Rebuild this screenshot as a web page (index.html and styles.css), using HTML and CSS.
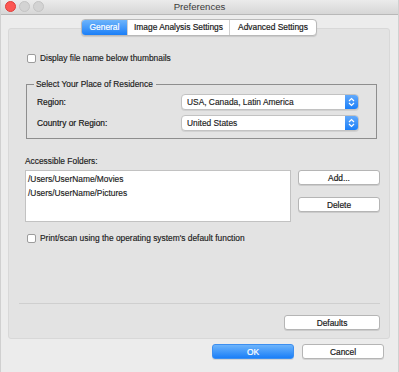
FILE: index.html
```html
<!DOCTYPE html>
<html lang="en">
<head>
    <meta charset="UTF-8">
    <title>Preferences</title>
    <link rel="stylesheet" href="styles.css">
</head>
<body>
    <div class="window">
        <div class="titlebar">
            <div class="lights">
                <span class="light close"></span>
                <span class="light"></span>
                <span class="light"></span>
            </div>
            <div class="title">Preferences</div>
        </div>

        <div class="content">
            <div class="tabs">
                <div class="tab active">General</div>
                <div class="tab">Image Analysis Settings</div>
                <div class="tab">Advanced Settings</div>
            </div>

            <div class="panel">
                <label class="check">
                    <span class="box"></span>
                    Display file name below thumbnails
                </label>

                <fieldset class="group">
                    <legend>Select Your Place of Residence</legend>
                    <div class="row">
                        <span class="row-label">Region:</span>
                        <div class="popup">
                            <span class="popup-text">USA, Canada, Latin America</span>
                            <span class="popup-arrows">
                                <svg width="7" height="10" viewBox="0 0 7 10"><path d="M1 4 L3.5 1.5 L6 4 M1 6 L3.5 8.5 L6 6" fill="none" stroke="#fff" stroke-width="1.2"/></svg>
                            </span>
                        </div>
                    </div>
                    <div class="row">
                        <span class="row-label">Country or Region:</span>
                        <div class="popup">
                            <span class="popup-text">United States</span>
                            <span class="popup-arrows">
                                <svg width="7" height="10" viewBox="0 0 7 10"><path d="M1 4 L3.5 1.5 L6 4 M1 6 L3.5 8.5 L6 6" fill="none" stroke="#fff" stroke-width="1.2"/></svg>
                            </span>
                        </div>
                    </div>
                </fieldset>

                <div class="section-label">Accessible Folders:</div>
                <div class="folders">
                    <div class="list">
                        <div class="item">/Users/UserName/Movies</div>
                        <div class="item">/Users/UserName/Pictures</div>
                    </div>
                    <div class="side-buttons">
                        <button class="btn">Add...</button>
                        <button class="btn">Delete</button>
                    </div>
                </div>

                <label class="check check-print">
                    <span class="box"></span>
                    Print/scan using the operating system's default function
                </label>

                <hr class="separator">

                <div class="panel-footer">
                    <button class="btn btn-wide">Defaults</button>
                </div>
            </div>

            <div class="footer">
                <button class="btn btn-primary">OK</button>
                <button class="btn">Cancel</button>
            </div>
        </div>
    </div>
</body>
</html>
```

FILE: styles.css
```css
body {
    margin: 0;
    font-family: "Liberation Sans", Arial, sans-serif;
    color: #1a1a1a;
    background: #ececec;
}
.window {
    width: 399px;
    height: 372px;
    box-sizing: border-box;
    background: #ececec;
    border-left: 1px solid #d0d0d0;
    border-right: 1px solid #d0d0d0;
    overflow: hidden;
}
.titlebar {
    position: relative;
    height: 14px;
    background: linear-gradient(#ebebeb, #d6d6d6);
    border-bottom: 1px solid #b8b8b8;
}
.lights {
    display: flex;
    gap: 3px;
    padding: 1px 0 0 4px;
}
.light {
    width: 11px;
    height: 11px;
    border-radius: 50%;
    box-sizing: border-box;
    background: #d3d3d3;
    border: 1px solid #c4c4c4;
}
.light.close {
    background: #fc5753;
    border-color: #df3e3a;
}
.title {
    position: absolute;
    left: 0;
    right: 0;
    top: 1px;
    text-align: center;
    font-size: 9.6px;
    color: #3a3a3a;
}
.content {
    padding: 0 8px 0 7px;
}
.tabs {
    position: relative;
    z-index: 1;
    display: flex;
    width: max-content;
    margin: 4px auto -8px;
    background: #fff;
    border: 1px solid #b9b9b9;
    border-radius: 4px;
    box-shadow: 0 1px 1px rgba(0, 0, 0, 0.12);
    overflow: hidden;
}
.tab {
    height: 15px;
    line-height: 15px;
    font-size: 8.4px;
    -webkit-text-stroke: 0.2px #1a1a1a;
    text-align: center;
    border-left: 1px solid #d0d0d0;
}
.tab:nth-child(1) {
    width: 45px;
    border-left: none;
}
.tab:nth-child(2) {
    width: 101px;
}
.tab:nth-child(3) {
    width: 86px;
}
.tab.active {
    color: #fff;
    -webkit-text-stroke: 0.2px #fff;
    background: linear-gradient(#6db4fb, #1b7ff8);
}
.panel {
    height: 311px;
    box-sizing: border-box;
    background: #e3e3e3;
    border: 1px solid #d8d8d8;
    border-radius: 3px;
    padding: 24px 9px 0 10px;
    font-size: 8.4px;
}
.check {
    display: flex;
    align-items: center;
    gap: 4px;
    height: 10px;
    margin-left: 8px;
    -webkit-text-stroke: 0.15px #1a1a1a;
}
.box {
    width: 9px;
    height: 9px;
    box-sizing: border-box;
    background: #fff;
    border: 1px solid #9c9c9c;
    border-radius: 2px;
}
.group {
    margin: 16px 3px 0 7px;
    padding: 5px 17px 7px 10px;
    border: 1px solid #8e8e8e;
    border-radius: 0;
}
.group legend {
    padding: 0 3px 0 2px;
    margin-left: -3px;
    -webkit-text-stroke: 0.15px #1a1a1a;
}
.row {
    display: flex;
    align-items: center;
    justify-content: space-between;
    margin-bottom: 5px;
}
.row:last-child {
    margin-bottom: 0;
}
.row-label {
    -webkit-text-stroke: 0.2px #1a1a1a;
}
.popup {
    display: flex;
    align-items: center;
    width: 178px;
    height: 16px;
    box-sizing: border-box;
    background: #fff;
    border: 1px solid #c2c2c2;
    border-radius: 4px;
    overflow: hidden;
    box-shadow: 0 1px 0 rgba(0, 0, 0, 0.08);
}
.popup-text {
    flex: 1;
    padding-left: 5px;
    -webkit-text-stroke: 0.15px #1a1a1a;
}
.popup-arrows {
    display: flex;
    align-items: center;
    justify-content: center;
    width: 13px;
    height: 100%;
    background: linear-gradient(#62a9fb, #1b7ff8);
}
.section-label {
    margin: 17px 0 0 6px;
    -webkit-text-stroke: 0.15px #1a1a1a;
}
.folders {
    display: flex;
    align-items: flex-start;
    margin-top: 4px;
    gap: 7px;
}
.list {
    width: 267px;
    height: 52px;
    box-sizing: border-box;
    margin-left: 6px;
    background: #fff;
    border: 1px solid #c2c2c2;
    padding: 2px 0 0 2px;
}
.item {
    height: 14px;
    line-height: 12px;
    -webkit-text-stroke: 0.15px #1a1a1a;
}
.side-buttons {
    display: flex;
    flex-direction: column;
    gap: 12px;
}
.btn {
    width: 82px;
    height: 15px;
    padding: 0;
    box-sizing: border-box;
    font-family: "Liberation Sans", Arial, sans-serif;
    font-size: 8.4px;
    color: #1a1a1a;
    -webkit-text-stroke: 0.2px #1a1a1a;
    background: #fff;
    border: 1px solid #b5b5b5;
    border-radius: 3px;
    box-shadow: 0 1px 0 rgba(0, 0, 0, 0.1);
}
.check-print {
    margin-top: 11px;
}
.separator {
    margin: 60px 0 0 0;
    border: none;
    border-top: 1px solid #cfcfcf;
}
.panel-footer {
    display: flex;
    justify-content: flex-end;
    margin-top: 11px;
}
.btn-wide {
    width: 96px;
}
.footer {
    display: flex;
    justify-content: flex-end;
    gap: 8px;
    margin-top: 5px;
    padding-right: 6px;
}
.btn-primary {
    color: #fff;
    -webkit-text-stroke: 0.2px #fff;
    background: linear-gradient(#6db4fb, #1b7ff8);
    border-color: #3d8ff0;
}
```
